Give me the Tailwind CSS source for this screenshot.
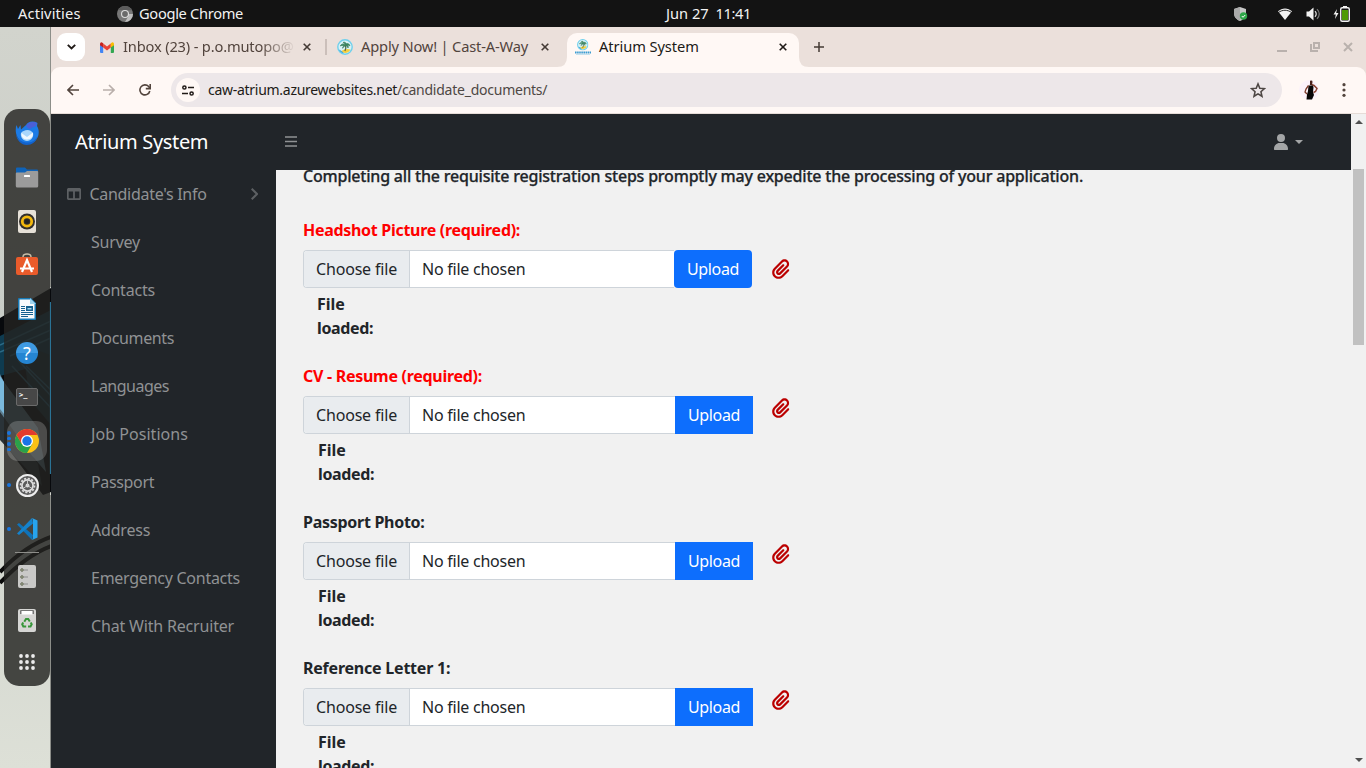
<!DOCTYPE html>
<html lang="en">
<head>
<meta charset="utf-8">
<title>Atrium System</title>
<script src="https://cdn.jsdelivr.net/npm/@tailwindcss/browser@4"></script>
</head>
<body class="flex h-[768px] w-[1366px] flex-col overflow-hidden bg-[#d9dcd4] font-['Noto_Sans',sans-serif] whitespace-nowrap">

<svg class="hidden">
  <symbol id="clip" viewBox="0 0 448 512"><path fill="currentColor" d="M364.2 83.8c-24.4-24.4-64-24.4-88.4 0l-184 184c-42.1 42.1-42.1 110.3 0 152.4s110.3 42.1 152.4 0l152-152c10.9-10.9 28.7-10.9 39.6 0s10.9 28.7 0 39.6l-152 152c-64 64-167.6 64-231.6 0s-64-167.6 0-231.6l184-184c46.3-46.3 121.3-46.3 167.6 0s46.3 121.3 0 167.6l-176 176c-28.6 28.6-75 28.6-103.6 0s-28.6-75 0-103.6l144-144c10.9-10.9 28.7-10.9 39.6 0s10.9 28.7 0 39.6l-144 144c-6.7 6.7-6.7 17.7 0 24.4s17.7 6.7 24.4 0l176-176c24.4-24.4 24.4-64 0-88.4z"/></symbol>
  <symbol id="x" viewBox="0 0 8 8"><path d="M.7.7l6.6 6.6M7.3.7L.7 7.3" stroke="currentColor" stroke-width="1.6" fill="none"/></symbol>
  <symbol id="island" viewBox="0 0 16 16">
    <circle cx="8" cy="8" r="7.2" fill="#d8f1f7" stroke="#6fd0ec" stroke-width="1.4"/>
    <path d="M4 12.5c2-2.200 6-3.200 9.500-2-1 3-6 4.800-9.500 2z" fill="#f5cf3f"/>
    <path d="M2 10.500c2 .8 3 1.800 5 3.700-2.200 0-4-1-5-3.700z" fill="#3ea3dc"/>
    <path d="M8.200 6c1 2 .9 4-.3 6" stroke="#4c6a4c" stroke-width="1.300" fill="none"/>
    <path d="M8 5.500C6 4.300 4.200 5 3.300 7c1.500-.9 2.700-.7 3.500 0C6 7.500 5.600 8.300 5.700 9.300 6.500 7.800 7.500 7 8.500 6.700c1.300.2 2.200 1 2.500 2.300.5-1.300.2-2.200-.5-2.700 1-.3 1.800 0 2.400.7C12.600 5 11 4 9.300 4.800 8.900 3.500 7.500 2.800 6 3.400 7.200 3.800 7.800 4.500 8 5.500z" fill="#3c8461" stroke="#3c8461" stroke-width=".7"/>
  </symbol>
</svg>

<!-- Desktop top bar -->
<header class="grid h-[27px] shrink-0 grid-cols-[1fr_auto_1fr] items-center bg-[#131313] text-[14.67px] leading-none text-[#f2f2f2]">
  <div class="flex items-center pl-[18px]">
    <span class="w-[99px] tracking-[0.15px]">Activities</span>
    <svg class="mr-[6px] size-4" viewBox="0 0 16 16"><circle cx="8" cy="8" r="8" fill="#777"/><path d="M8 8h8a8 8 0 0 1-8 8l3.500-6z" fill="#bdbdbd"/><path d="M1.100 4A8 8 0 0 1 15 4.200H8z" fill="#5c5c5c"/><circle cx="8" cy="8" r="4" fill="#ddd"/><circle cx="8" cy="8" r="2.900" fill="#6a6a6a"/></svg>
    <span class="tracking-[-0.32px]">Google Chrome</span>
  </div>
  <div class="flex w-[85px] translate-x-[25.500px] justify-between"><span>Jun 27</span><span class="tracking-[-0.4px]">11:41</span></div>
  <div class="flex items-center justify-end pr-[16px]">
    <svg class="mr-[29px] h-4 w-[15px]" viewBox="0 0 15 16"><path d="M7 1l6 2v4c0 4-2.500 6.500-6 8-3.500-1.500-6-4-6-8V3z" fill="#c6c6c6"/><path d="M7 1v14c-3.500-1.500-6-4-6-8V3z" fill="#aaa"/><circle cx="10.500" cy="10" r="3.700" fill="#2fa84a"/><path d="M8.800 10l1.200 1.300 2.200-2.300" stroke="#fff" fill="none"/></svg>
    <svg class="mr-[13px] h-[14px] w-4" viewBox="0 0 16 14"><path d="M1 4.300C5 .4 11 .4 15 4.300L8 13z" fill="#f2f2f2"/><path d="M1.500 5.500C5.500 2.500 10.500 2.500 14.500 5.500" stroke="#131313" fill="none" stroke-width=".9"/></svg>
    <svg class="mr-[12px] h-[14px] w-[15px]" viewBox="0 0 15 14"><path d="M.5 4.500h2.500L7.500.5v13L3 9.500H.5z" fill="#f2f2f2"/><path d="M9 4.200c1.500 1.700 1.500 3.900 0 5.600" stroke="#ddd" stroke-width="1.200" fill="none"/><path d="M11 2.200c3 3 3 6.600 0 9.600" stroke="#777" stroke-width="1.200" fill="none"/></svg>
    <svg class="h-4 w-[17px]" viewBox="0 0 17 16"><path d="M4 3L.500 8.500h2.300L2 13l3.500-6H3.200z" fill="#f2f2f2"/><rect x="7.700" y="1.700" width="8.600" height="13.600" rx="1.500" fill="none" stroke="#f2f2f2" stroke-width="1.400"/><rect x="10" y="0" width="4" height="2" fill="#f2f2f2"/><rect x="9" y="4" width="6" height="10" fill="#4e9a06"/></svg>
  </div>
</header>

<div class="flex min-h-0 flex-1">
  <!-- Wallpaper strip and dock -->
  <aside class="relative w-[51px] shrink-0 overflow-hidden">
    <svg class="absolute inset-0 h-[741px] w-[51px]" viewBox="0 27 51 741">
      <defs><linearGradient id="wall" x1="0" y1="0" x2="0" y2="1"><stop offset="0" stop-color="#d2d4cd"/><stop offset=".4" stop-color="#c9cdc7"/><stop offset="1" stop-color="#dde0d7"/></linearGradient></defs>
      <rect y="27" width="51" height="741" fill="url(#wall)"/>
      <path d="M0 318L51 288v204l-8 3L0 438z" fill="#07090c"/>
      <path d="M0 336l51-26v52l-51 14z" fill="#0e3b50"/>
      <path d="M22 345l29 10v70L30 400z" fill="#122c3a"/>
      <path d="M0 345l51-24M0 352l51-22M10 356l41-18M12 366l39 42M18 360l33 36M26 366l25 24" stroke="#2b6a86" stroke-width="1.500"/>
      <path d="M0 374l4 8 34 46 8 44-12-14L0 430z" fill="#5d7f92"/><path d="M0 376l4 6v32l-4-5z" fill="#7ab9dc"/>
      <path d="M0 412l38 52 4 22L0 440z" fill="#2a3338"/>
      <path d="M49.500 302h1.500v172h-1.500z" fill="#2a7396"/>
      <path d="M0 572Q25 546 51 537M0 583Q25 556 51 546" stroke="#0b0b0b" stroke-width="4" fill="none"/>
      <path d="M50 27h1v260h-1zM50 495h1v273h-1z" fill="#8c8e89"/>
    </svg>
    <nav class="relative mt-[82px] ml-1 flex h-[577px] w-[46px] flex-col items-center rounded-[15px] bg-[#232321]/82 pt-[2px]">
      <div class="flex h-11 items-center"><svg class="size-6" viewBox="0 0 24 24"><path d="M1.500 4C.5 7 0 12 3 17c3 6 11 8 17 3 4-4 5-10 2-15l.5-3C18-.5 13 .5 11 4L6 8.500 5.500 4 3 8z" fill="#1b7be6"/><path d="M11 5c2-4 7-5 11-3l-1.500 3.500C18 5 16 8 14 8z" fill="#4b5fd6"/><path d="M6 12c2-3 9-5 12 0 1 4-2 8-6 8s-7-4-6-8z" fill="#a9d6fb"/><path d="M6.500 12l5.500 4 6-4.500c.5 4-2 7-6 7s-6-3-5.500-6.500z" fill="#eef7fe"/><path d="M1 13c2 6 6 8.500 12 8.500 5 0 8-3 9.500-6.500-1 6-6 9-10.500 9C6 24 1.500 19 1 13z" fill="#1262cc"/></svg></div>
      <div class="flex h-11 items-center"><svg class="h-[21px] w-6" viewBox="0 0 24 21"><path d="M1 1.500Q1 .500 2 .500h8l2 2h10q1 0 1 1V10H1z" fill="#0f63b8"/><path d="M.8 6.500q0-1 1-1H10l2-1.500h10.200q1 0 1 1V19q0 1.500-1.500 1.500H2.300Q.8 20.500.8 19z" fill="#9b9b9b"/><rect x="9" y="8" width="6" height="2" rx=".5" fill="#fff"/></svg></div>
      <div class="flex h-11 items-center"><svg class="h-[23px] w-[18px]" viewBox="0 0 18 23"><rect width="18" height="23" rx="2" fill="#e6e1d8"/><circle cx="9" cy="11.500" r="8" fill="#33302c"/><circle cx="9" cy="11.500" r="4.700" fill="none" stroke="#f3b90e" stroke-width="2.800"/><circle cx="9" cy="11.500" r="2.200" fill="#222"/></svg></div>
      <div class="flex h-11 items-center"><svg class="-mt-[3px] h-[22px] w-[22px]" viewBox="0 0 22 22"><path d="M7 4q0-3 4-3t4 3" stroke="#c9bfa9" stroke-width="1.500" fill="none"/><rect y="4" width="22" height="18" rx="2" fill="#e95b2b"/><path d="M6 19l5-12 5 12M4 15.500h14" stroke="#fff" stroke-width="2.200" fill="none"/></svg></div>
      <div class="flex h-11 items-center"><svg class="h-[22px] w-[18px]" viewBox="0 0 18 22"><path d="M1 0h12l5 5v16q0 1-1 1H1q-1 0-1-1V1q0-1 1-1z" fill="#1679b5"/><path d="M1.500 1.500h11l4 4v15h-15z" fill="#f7fafc"/><path d="M12 0v6h6z" fill="#9ed3ee"/><path d="M3 8.500h4M3 10.500h4M3 12.500h4M3 14.500h12M3 16.500h12M3 18.500h7" stroke="#15608f" stroke-width="1.100"/><rect x="8" y="8" width="7" height="5" fill="#15608f"/><rect x="9.500" y="10" width="4" height="1.500" fill="#a9d8ef"/></svg></div>
      <div class="flex h-11 items-center"><span class="flex size-[22px] items-center justify-center rounded-full bg-linear-to-b from-[#3e9ae2] from-50% to-[#2585d2] to-50% text-[18px] leading-none text-white">?</span></div>
      <div class="flex h-11 items-center"><div class="flex h-[18px] w-[22px] rounded-[2px] border border-[#6b6b6b] bg-[#474747] pt-[3px] pl-[2px] font-['DejaVu_Sans_Mono',monospace] text-[7px] leading-[7px] font-bold text-white">&gt;_</div></div>
      <div class="relative flex h-11 items-center">
        <div class="flex size-10 items-center justify-center rounded-[11px] bg-white/20"><svg class="size-6" viewBox="0 0 24 24"><circle cx="12" cy="12" r="12" fill="#fbc116"/><path d="M1.600 6A12 12 0 0 0 12 24l5.200-9L12 12 6.800 15z" fill="#2aa14b"/><path d="M1.600 6A12 12 0 0 1 22.400 6H12v6l-5.200 3z" fill="#e33b2e"/><circle cx="12" cy="12" r="6" fill="#fff"/><circle cx="12" cy="12" r="4.700" fill="#1a73e8"/></svg></div>
        <div class="absolute top-[12px] left-0 flex flex-col gap-[2px]"><i class="size-[3.500px] rounded-full bg-[#1775e0]"></i><i class="size-[3.500px] rounded-full bg-[#1775e0]"></i><i class="size-[3.500px] rounded-full bg-[#1775e0]"></i><i class="size-[3.500px] rounded-full bg-[#1775e0]"></i></div>
      </div>
      <div class="relative flex h-11 w-10 items-center justify-center"><i class="absolute top-5 left-0 size-1 rounded-full bg-[#1775e0]"></i><svg class="size-[23px]" viewBox="0 0 24 24"><circle cx="12" cy="12" r="10.900" fill="#5c5c5c" stroke="#eee" stroke-width="2.200"/><circle cx="12" cy="12" r="7.300" fill="none" stroke="#ddd" stroke-width="1.800" stroke-dasharray="2.200 1.620"/><circle cx="12" cy="12" r="5.800" fill="none" stroke="#ddd" stroke-width="1.800"/><circle cx="12" cy="12" r="2" fill="#ddd"/><path d="M12 12V6.500M12 12l-4.500 3M12 12l4.500 3" stroke="#ccc"/></svg></div>
      <div class="relative flex h-11 w-10 items-center justify-center"><i class="absolute top-5 left-0 size-1 rounded-full bg-[#1775e0]"></i><svg class="size-[22px]" viewBox="0 0 22 22"><path d="M1 6.500L3 5l14 12-1 5z" fill="#0f73b9"/><path d="M1 15.500L3 17 17 5.500 16 0z" fill="#1583cc"/><path d="M16 0l5.500 2.500v17L16 22q1-1 1-3V3q0-2-1-3z" fill="#27a4ee"/></svg></div>
      <div class="mt-[1px] h-px w-6 shrink-0 bg-[#8d8d89]"></div>
      <div class="mt-[1px] flex h-11 items-center"><svg class="h-[23px] w-[18px]" viewBox="0 0 18 23"><rect width="18" height="23" rx="2" fill="#c9c9c7"/><g fill="#a8b09a" stroke="#60644f" stroke-width=".9"><circle cx="4" cy="5" r="1.300"/><circle cx="4" cy="12" r="1.300"/><circle cx="4" cy="19" r="1.300"/></g><path d="M6.500 5h3M6.500 12h3M6.500 19h3" stroke="#555" stroke-dasharray="1 1"/></svg></div>
      <div class="flex h-11 items-center"><svg class="h-[23px] w-[18px]" viewBox="0 0 18 23"><rect width="18" height="23" rx="2" fill="#d6d6d4"/><path d="M2 5V2q0-1 1-1h12q1 0 1 1v3h-2V3H4v2z" fill="#777"/><rect x="3.500" y="2" width="11" height="3.500" fill="#fff"/><path d="M6.300 12.800L8 10h2.200l1.600 2.500M12.700 13.500l1 1.700-1.200 2.300H10M8.200 17.500H5.300L4.200 15.300l1-1.800" stroke="#37963a" stroke-width="2" fill="none"/></svg></div>
      <div class="flex h-10 items-center"><svg class="size-4" viewBox="0 0 16 16" fill="#ececec"><circle cx="2" cy="2" r="1.900"/><circle cx="8" cy="2" r="1.900"/><circle cx="14" cy="2" r="1.900"/><circle cx="2" cy="8" r="1.900"/><circle cx="8" cy="8" r="1.900"/><circle cx="14" cy="8" r="1.900"/><circle cx="2" cy="14" r="1.900"/><circle cx="8" cy="14" r="1.900"/><circle cx="14" cy="14" r="1.900"/></svg></div>
    </nav>
  </aside>

  <!-- Browser window -->
  <main class="flex min-w-0 flex-1 flex-col bg-[#ebe0db]">
    <div class="flex h-10 shrink-0 items-center pl-[6px] text-[14.67px] leading-5 text-[#52443d]">
      <div class="flex size-7 items-center justify-center rounded-[9px] bg-white"><svg class="h-[6px] w-[9px] text-[#201a17]" viewBox="0 0 9 6"><path d="M.8.8l3.700 3.700L8.200.8" stroke="currentColor" stroke-width="1.900" fill="none"/></svg></div>
      <svg class="ml-[15px] h-[11px] w-[14px]" viewBox="0 0 14 11"><path d="M0 2v8q0 1 1 1h2.200V4z" fill="#4285f4"/><path d="M14 2v8q0 1-1 1h-2.200V4z" fill="#34a853"/><path d="M3.200 1.500L7 4.400l3.800-2.900v4L7 8.400 3.200 5.500z" fill="#ea4335"/><path d="M0 2Q0 .2 1.600.3L3.200 1.300v4.200L0 3.200z" fill="#c5221f"/><path d="M14 2Q14 .2 12.400.3l-1.600 1v4.200L14 3.200z" fill="#fbbc04"/></svg>
      <span class="-mt-[2px] ml-[9px] w-[171px] tracking-[-0.17px] mask-[linear-gradient(to_right,#000_80%,transparent_101%)]">Inbox (23) - p.o.mutopo@</span>
      <svg class="ml-[9px] size-2 text-[#443a35]"><use href="#x"/></svg>
      <i class="ml-[14px] h-4 w-[1.500px] bg-[#cbbfba]"></i>
      <svg class="ml-[10.500px] size-4"><use href="#island"/></svg>
      <span class="-mt-[2px] ml-[8px] w-[168px] tracking-[-0.17px]">Apply Now! | Cast-A-Way</span>
      <svg class="ml-[12px] size-2 text-[#443a35]"><use href="#x"/></svg>
      <div class="relative ml-[18px] flex h-[34px] w-[232px] items-center self-end rounded-t-[10px] bg-[#fff8f5] pb-[7px] text-[#201a17]">
        <svg class="absolute bottom-0 -left-[10px] size-[10px]" viewBox="0 0 10 10"><path d="M10 0v10H0Q10 10 10 0z" fill="#fff8f5"/></svg>
        <svg class="absolute -right-[10px] bottom-0 size-[10px]" viewBox="0 0 10 10"><path d="M0 0v10h10Q0 10 0 0z" fill="#fff8f5"/></svg>
        <svg class="ml-2 h-4 w-4" viewBox="0 0 16 16"><use href="#island" x="2" y="0" width="11.500" height="11.500"/><path d="M0 13.500h16" stroke="#3b9cd2" stroke-width="2.200" stroke-dasharray="1.600 .5"/><path d="M1 15.500h14" stroke="#b9dcec" stroke-width=".8"/></svg>
        <span class="-mt-[1px] ml-2 w-[100px] tracking-[-0.08px]">Atrium System</span>
        <svg class="ml-[80px] size-2"><use href="#x"/></svg>
      </div>
      <svg class="ml-[15px] size-[10px] text-[#443a35]" viewBox="0 0 10 10"><path d="M5 0v10M0 5h10" stroke="currentColor" stroke-width="1.500"/></svg>
      <div class="ml-auto flex items-center gap-[22px] pr-[13px] text-[#b9b1ad]">
        <svg class="mt-[2px] mr-px size-[10px]" viewBox="0 0 10 10"><path d="M0 8h10" stroke="currentColor" stroke-width="2"/></svg>
        <svg class="mr-px size-[10px]" viewBox="0 0 10 10"><path d="M4 1h5v5H4zM1 2v7h7" stroke="currentColor" stroke-width="2" fill="none"/></svg>
        <svg class="size-[10px]" viewBox="0 0 10 10"><path d="M1 1l8 8M9 1L1 9" stroke="currentColor" stroke-width="2"/></svg>
      </div>
    </div>

    <div class="flex h-[47px] shrink-0 items-center rounded-t-[9px] border-b border-[#e6dcd7] bg-[#fff8f5] pl-4 text-[#52443d]">
      <svg class="size-3" viewBox="0 0 12 12"><path d="M12 6H1M6 1L1 6l5 5" stroke="currentColor" stroke-width="1.600" fill="none"/></svg>
      <svg class="ml-6 size-3 text-[#b9afab]" viewBox="0 0 12 12"><path d="M0 6h11M6 1l5 5-5 5" stroke="currentColor" stroke-width="1.600" fill="none"/></svg>
      <svg class="ml-6 size-3" viewBox="0 0 12 12"><path d="M10.800 7A5 5 0 1 1 9.700 2.600L11 4" stroke="currentColor" stroke-width="1.600" fill="none"/><path d="M11.200 0v4.600H6.800" stroke="currentColor" stroke-width="1.600" fill="none"/></svg>
      <div class="ml-5 flex h-[34px] w-[1111px] items-center rounded-full bg-[#ede7e9] pl-[5px] text-sm leading-5 text-[#4e4744]">
        <div class="flex size-6 items-center justify-center rounded-full bg-[#fff8f5] text-[#201a17]"><svg class="h-[11px] w-3" viewBox="0 0 12 11" fill="none" stroke="currentColor" stroke-width="1.500"><circle cx="2.400" cy="2.500" r="1.600"/><path d="M6 2.500h6M0 8.500h6"/><circle cx="9.600" cy="8.500" r="1.600"/></svg></div>
        <span class="ml-2 w-[189px] tracking-[-0.28px] text-[#201a17]">caw-atrium.azurewebsites.net</span><span class="tracking-[-0.24px]">/candidate_documents/</span>
        <svg class="mr-4 ml-auto size-4" viewBox="0 0 24 24"><path d="M12 2.800l2.700 6.500 7 .6-5.300 4.600 1.600 6.900-6-3.700-6 3.700 1.600-6.900L2.300 9.900l7-.6z" stroke="currentColor" stroke-width="2.300" fill="none"/></svg>
      </div>
      <svg class="ml-[17px] size-5" viewBox="0 0 20 20"><circle cx="10" cy="10" r="10" fill="#fbf2fb"/><path d="M11 4l4 1.500 3 3-1.500 3-2 1" stroke="#8b4433" stroke-width="1.500" fill="none"/><path d="M11 .8q2.500-.8 2.500 1.200l-.5 3h-2z" fill="#4a211a"/><path d="M9.500 5.500h4.500l.5 2-.5 4.500 1 3-2 4.500H7.500l.5-5 1-3.500z" fill="#080708"/><path d="M9.500 5.500L7 9l-1 3 2 2" stroke="#7d3c2d" stroke-width="1.300" fill="none"/></svg>
      <svg class="ml-[23px] h-[14px] w-1" viewBox="0 0 4 14" fill="currentColor"><circle cx="2" cy="1.700" r="1.600"/><circle cx="2" cy="7" r="1.600"/><circle cx="2" cy="12.300" r="1.600"/></svg>
    </div>

    <!-- Page viewport -->
    <div class="flex min-h-0 flex-1 bg-[#f1f1f1]">
      <div class="flex min-w-0 flex-1 flex-col">
        <nav class="flex h-14 shrink-0 items-center bg-[#212529] pl-6 text-[#909294]">
          <span class="w-[210px] text-xl leading-none tracking-[-0.34px] text-white">Atrium System</span>
          <svg class="-mt-[2px] h-[11px] w-3" viewBox="0 0 12 11"><path d="M0 1h12M0 5.500h12M0 10h12" stroke="currentColor" stroke-width="1.700"/></svg>
          <svg class="ml-auto h-4 w-[14px]" viewBox="0 0 448 512" fill="#a3a5a6"><path d="M224 256a128 128 0 1 0 0-256 128 128 0 1 0 0 256zm-45.700 32C79.800 288 0 367.800 0 466.300 0 512 0 512 40 512h368c40 0 40 0 40-45.700C448 367.800 368.200 288 269.700 288z"/></svg>
          <i class="mr-12 ml-[7px] border-x-[4.500px] border-t-[4.500px] border-x-transparent border-t-[#a3a5a6]"></i>
        </nav>
        <div class="flex min-h-0 flex-1">
          <aside class="w-[225px] shrink-0 bg-[#212529] text-base leading-6 text-[#909294]">
            <div class="flex h-12 items-center pr-[18px] pl-4">
              <svg class="h-3 w-[14px] text-[#5d6063]" viewBox="0 0 14 12"><path d="M.8 2q0-1.200 1.200-1.200h10q1.200 0 1.200 1.200v8q0 1.200-1.200 1.200H2Q.8 11.200.8 10zM7 3v8M1 2.500h12" stroke="currentColor" stroke-width="1.800" fill="none"/></svg>
              <span class="ml-[8.500px] tracking-[-0.3px]">Candidate's Info</span>
              <svg class="ml-auto h-3 w-[7px] text-[#5d6063]" viewBox="0 0 7 12"><path d="M.7.7L6 6 .7 11.300" stroke="currentColor" stroke-width="2" fill="none"/></svg>
            </div>
            <div class="flex flex-col gap-6 pt-3 pl-10">
              <span class="tracking-[-0.2px]">Survey</span>
              <span class="tracking-[-0.2px]">Contacts</span>
              <span class="tracking-[-0.35px]">Documents</span>
              <span class="tracking-[-0.5px]">Languages</span>
              <span class="tracking-[0.05px]">Job Positions</span>
              <span class="tracking-[-0.35px]">Passport</span>
              <span class="tracking-[-0.2px]">Address</span>
              <span class="tracking-[-0.26px]">Emergency Contacts</span>
              <span class="tracking-[-0.18px]">Chat With Recruiter</span>
            </div>
          </aside>
          <section class="min-w-0 flex-1 overflow-hidden pl-[27px] text-base leading-6 text-[#212529]">
            <p class="-mt-[6px] mb-[30px] font-medium tracking-[-0.2px] [-webkit-text-stroke:0.25px_#212529]">Completing all the requisite registration steps promptly may expedite the processing of your application.</p>

            <div class="mb-6">
              <div class="mb-2 font-bold tracking-[-0.3px] text-[#f00]">Headshot Picture (required):</div>
              <div class="flex h-[38px] items-center">
                <div class="flex h-full w-[371px] overflow-hidden rounded-l-[4px] border border-r-0 border-[#ced4da] bg-white leading-9"><span class="w-[106px] border-r border-[#ced4da] bg-[#e9ecef] pl-3 tracking-[-0.18px]">Choose file</span><span class="pl-3 tracking-[-0.24px]">No file chosen</span></div>
                <div class="flex h-full w-[78px] items-center justify-center rounded-[4px] bg-[#0d6efd] tracking-[-0.35px] text-white">Upload</div>
                <svg class="ml-5 h-5 w-[17.500px] text-[#bb0000]"><use href="#clip"/></svg>
              </div>
              <div class="mt-1 ml-[14px] w-[60px] font-bold"><div>File</div><div class="tracking-[-0.35px]">loaded:</div></div>
            </div>

            <div class="mb-6">
              <div class="mb-2 font-bold tracking-[-0.28px] text-[#f00]">CV - Resume (required):</div>
              <div class="flex h-[38px]">
                <div class="flex h-full w-[372px] overflow-hidden rounded-l-[4px] border border-r-0 border-[#ced4da] bg-white leading-9"><span class="w-[106px] border-r border-[#ced4da] bg-[#e9ecef] pl-3 tracking-[-0.18px]">Choose file</span><span class="pl-3 tracking-[-0.24px]">No file chosen</span></div>
                <div class="flex h-full w-[78px] items-center justify-center bg-[#0d6efd] tracking-[-0.35px] text-white">Upload</div>
                <svg class="mt-[2px] ml-[19px] h-5 w-[17.500px] text-[#bb0000]"><use href="#clip"/></svg>
              </div>
              <div class="mt-1 ml-[15px] w-[60px] font-bold"><div>File</div><div class="tracking-[-0.35px]">loaded:</div></div>
            </div>

            <div class="mb-6">
              <div class="mb-2 font-bold tracking-[-0.28px]">Passport Photo:</div>
              <div class="flex h-[38px]">
                <div class="flex h-full w-[372px] overflow-hidden rounded-l-[4px] border border-r-0 border-[#ced4da] bg-white leading-9"><span class="w-[106px] border-r border-[#ced4da] bg-[#e9ecef] pl-3 tracking-[-0.18px]">Choose file</span><span class="pl-3 tracking-[-0.24px]">No file chosen</span></div>
                <div class="flex h-full w-[78px] items-center justify-center bg-[#0d6efd] tracking-[-0.35px] text-white">Upload</div>
                <svg class="mt-[2px] ml-[19px] h-5 w-[17.500px] text-[#bb0000]"><use href="#clip"/></svg>
              </div>
              <div class="mt-1 ml-[15px] w-[60px] font-bold"><div>File</div><div class="tracking-[-0.35px]">loaded:</div></div>
            </div>

            <div class="mb-6">
              <div class="mb-2 font-bold tracking-[-0.22px]">Reference Letter 1:</div>
              <div class="flex h-[38px]">
                <div class="flex h-full w-[372px] overflow-hidden rounded-l-[4px] border border-r-0 border-[#ced4da] bg-white leading-9"><span class="w-[106px] border-r border-[#ced4da] bg-[#e9ecef] pl-3 tracking-[-0.18px]">Choose file</span><span class="pl-3 tracking-[-0.24px]">No file chosen</span></div>
                <div class="flex h-full w-[78px] items-center justify-center bg-[#0d6efd] tracking-[-0.35px] text-white">Upload</div>
                <svg class="mt-[2px] ml-[19px] h-5 w-[17.500px] text-[#bb0000]"><use href="#clip"/></svg>
              </div>
              <div class="mt-1 ml-[15px] w-[60px] font-bold"><div>File</div><div class="tracking-[-0.35px]">loaded:</div></div>
            </div>
          </section>
        </div>
      </div>
      <!-- Scrollbar -->
      <div class="flex w-[15px] shrink-0 flex-col items-center bg-[#f1f1f1]">
        <i class="mt-[6px] border-x-[4px] border-b-[4px] border-x-transparent border-b-[#505050]"></i>
        <div class="mt-[45px] h-[176px] w-[11px] bg-[#c1c1c1]"></div>
        <i class="mt-auto mb-[6px] border-x-[4px] border-t-[4px] border-x-transparent border-t-[#505050]"></i>
      </div>
    </div>
  </main>
</div>
</body>
</html>
